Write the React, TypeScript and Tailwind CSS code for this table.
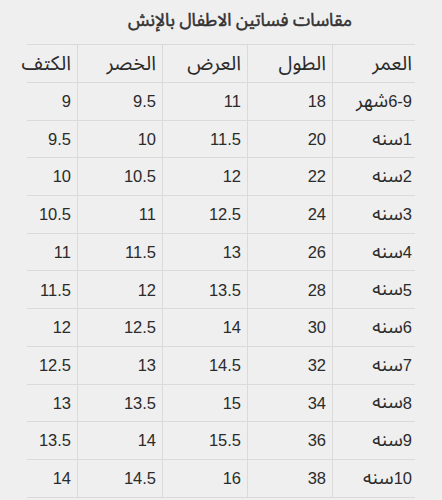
const headers = ["الكتف", "الخصر", "العرض", "الطول", "العمر"];

const SANA = "\u0633\u0646\u0647"; // سنه
const SHAHR = "\u0634\u0647\u0631"; // شهر

type Row = { v: string[]; n: string; w: string };

// values in visual order, left to right; the age cell shows w then n, left to right
const rows: Row[] = [
  { v: ["9", "9.5", "11", "18"], n: "6" + "-" + "9", w: SHAHR },
  { v: ["9.5", "10", "11.5", "20"], n: "1", w: SANA },
  { v: ["10", "10.5", "12", "22"], n: "2", w: SANA },
  { v: ["10.5", "11", "12.5", "24"], n: "3", w: SANA },
  { v: ["11", "11.5", "13", "26"], n: "4", w: SANA },
  { v: ["11.5", "12", "13.5", "28"], n: "5", w: SANA },
  { v: ["12", "12.5", "14", "30"], n: "6", w: SANA },
  { v: ["12.5", "13", "14.5", "32"], n: "7", w: SANA },
  { v: ["13", "13.5", "15", "34"], n: "8", w: SANA },
  { v: ["13.5", "14", "15.5", "36"], n: "9", w: SANA },
  { v: ["14", "14.5", "16", "38"], n: "10", w: SANA },
];

const cols = "grid grid-cols-[51px_85px_85px_85px_82px]";
const arabic = { fontFamily: '"Noto Sans Arabic", "DejaVu Sans", sans-serif' };

const App = () => {
  return (
    <div
      className="w-[442px] h-[500px] bg-[#efefef] text-[#2b2b2b] overflow-hidden"
      style={{ fontFamily: '"Liberation Sans", "DejaVu Sans", sans-serif' }}
    >
      <h1
        className="h-[44px] flex items-center justify-center pl-[38px] pb-[2px] text-[17.5px] font-normal text-[#333] [-webkit-text-stroke:0.5px_#333]"
        style={arabic}
      >
        مقاسات فساتين الاطفال بالإنش
      </h1>
      <div className="ml-[27px] w-[388px]">
        <div className={`${cols} h-[39px] border-y border-[#dadada]`}>
          {headers.map((h, i) => (
            <div
              key={i}
              className={`flex items-center justify-end text-[20px] leading-none ${
                i < 4 ? "border-r border-[#dadada] pr-[6px]" : "pr-[3px]"
              }`}
              style={arabic}
            >
              {h}
            </div>
          ))}
        </div>
        {rows.map((r, ri) => (
          <div key={ri} className={`${cols} h-[37.7px] border-b border-[#dadada]`}>
            {r.v.map((c, i) => (
              <div
                key={i}
                className="flex items-center justify-end pr-[6px] text-[16.5px] leading-none border-r border-[#dadada]"
              >
                {c}
              </div>
            ))}
            <div className="flex flex-row items-center justify-end pr-[3px] leading-none [direction:ltr]">
              <span className="text-[19px]" style={arabic}>
                {r.w}
              </span>
              <span className="text-[16.5px] [direction:ltr] [unicode-bidi:isolate]">{r.n}</span>
            </div>
          </div>
        ))}
      </div>
    </div>
  );
};

export default App;
